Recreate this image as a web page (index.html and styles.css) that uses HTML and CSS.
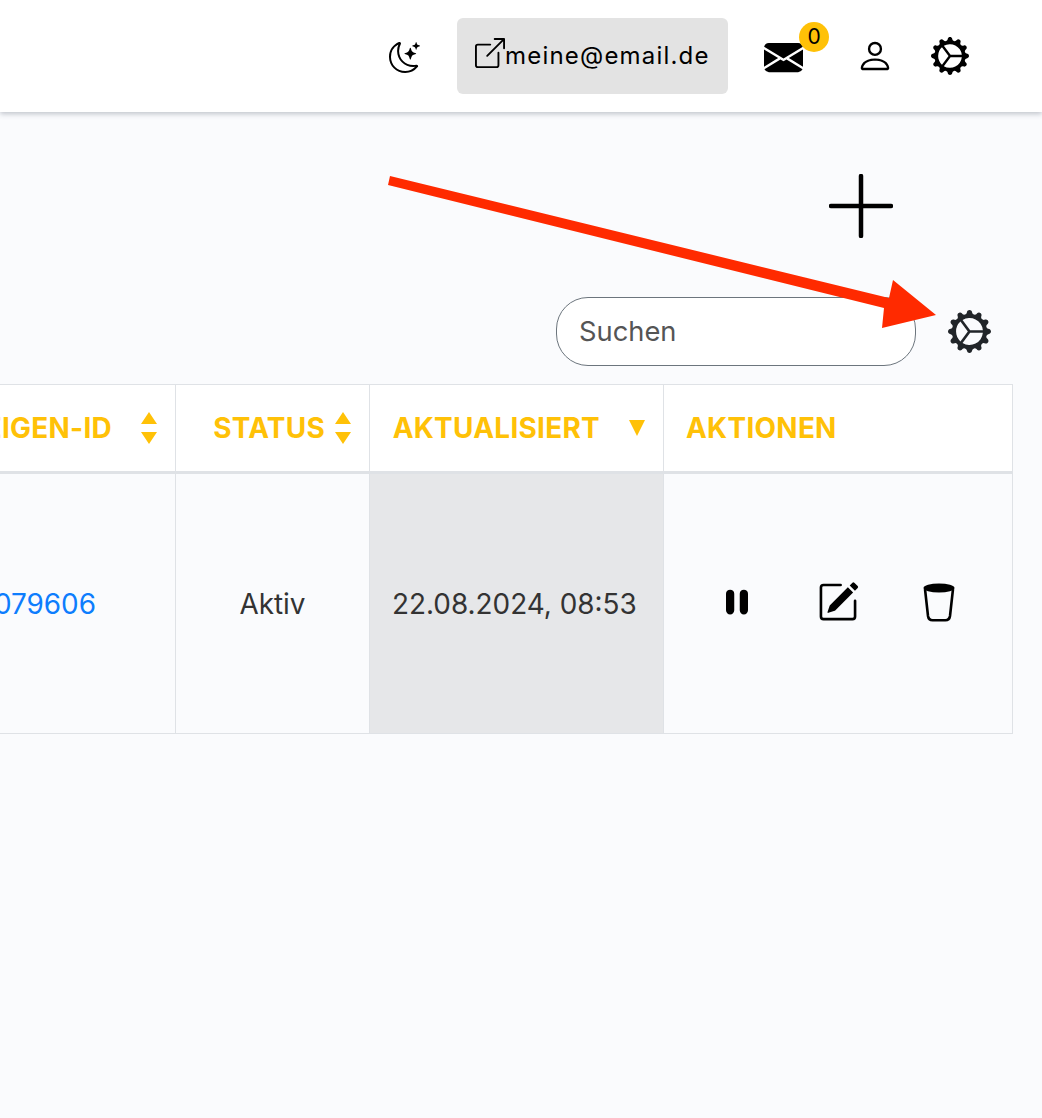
FILE: index.html
```html
<!DOCTYPE html>
<html lang="de">
<head>
<meta charset="utf-8">
<title>Anzeigen</title>
<link rel="stylesheet" href="styles.css">
</head>
<body>
<header class="navbar">
  <svg class="icon moon" viewBox="0 0 16 16"><path d="M6 .278a.77.77 0 0 1 .08.858 7.2 7.2 0 0 0-.878 3.46c0 4.021 3.278 7.277 7.318 7.277q.792-.001 1.533-.16a.79.79 0 0 1 .81.316.73.73 0 0 1-.031.893A8.35 8.35 0 0 1 8.344 16C3.734 16 0 12.286 0 7.71 0 4.266 2.114 1.312 5.124.06A.75.75 0 0 1 6 .278M4.858 1.311A7.27 7.27 0 0 0 1.025 7.71c0 4.02 3.279 7.276 7.319 7.276a7.32 7.32 0 0 0 5.205-2.162q-.506.063-1.029.063c-4.61 0-8.343-3.714-8.343-8.29 0-1.167.242-2.278.681-3.286"/><path d="M10.794 3.148a.217.217 0 0 1 .412 0l.387 1.162c.173.518.579.924 1.097 1.097l1.162.387a.217.217 0 0 1 0 .412l-1.162.387a1.73 1.73 0 0 0-1.097 1.097l-.387 1.162a.217.217 0 0 1-.412 0l-.387-1.162A1.73 1.73 0 0 0 9.31 6.593l-1.162-.387a.217.217 0 0 1 0-.412l1.162-.387a1.73 1.73 0 0 0 1.097-1.097zM13.863.099a.145.145 0 0 1 .274 0l.258.774c.115.346.386.617.732.732l.774.258a.145.145 0 0 1 0 .274l-.774.258a1.16 1.16 0 0 0-.732.732l-.258.774a.145.145 0 0 1-.274 0l-.258-.774a1.16 1.16 0 0 0-.732-.732l-.774-.258a.145.145 0 0 1 0-.274l.774-.258c.346-.115.617-.386.732-.732z"/></svg>
  <div class="account">
    <svg class="icon external" viewBox="0 0 16 16"><path fill-rule="evenodd" d="M8.636 3.5a.5.5 0 0 0-.5-.5H1.5A1.5 1.5 0 0 0 0 4.5v10A1.5 1.5 0 0 0 1.5 16h10a1.5 1.5 0 0 0 1.5-1.5V7.864a.5.5 0 0 0-1 0V14.5a.5.5 0 0 1-.5.5h-10a.5.5 0 0 1-.5-.5v-10a.5.5 0 0 1 .5-.5h6.636a.5.5 0 0 0 .5-.5"/><path fill-rule="evenodd" d="M16 .5a.5.5 0 0 0-.5-.5h-5a.5.5 0 0 0 0 1h3.793L6.146 9.146a.5.5 0 1 0 .708.708L15 1.707V5.5a.5.5 0 0 0 1 0z"/></svg>
    <span class="account-name">meine@email.de</span>
  </div>
  <div class="mail">
    <svg class="icon envelope" viewBox="0 0 16 16"><path d="M.05 3.555A2 2 0 0 1 2 2h12a2 2 0 0 1 1.95 1.555L8 8.414zM0 4.697v7.104l5.803-3.558zM6.761 8.83l-6.57 4.027A2 2 0 0 0 2 14h12a2 2 0 0 0 1.808-1.144l-6.57-4.027L8 9.586zm3.436-.586L16 11.801V4.697z"/></svg>
    <span class="badge">0</span>
  </div>
  <svg class="icon person" viewBox="0 0 16 16"><path d="M8 8a3 3 0 1 0 0-6 3 3 0 0 0 0 6m2-3a2 2 0 1 1-4 0 2 2 0 0 1 4 0m4 8c0 1-1 1-1 1H3s-1 0-1-1 1-4 6-4 6 3 6 4m-1-.004c-.001-.246-.154-.986-.832-1.664C11.516 10.68 10.289 10 8 10s-3.516.68-4.168 1.332c-.678.678-.83 1.418-.832 1.664z"/></svg>
  <svg class="icon gear-nav" viewBox="0 0 16 16"><path d="M7.068.727c.243-.97 1.62-.97 1.864 0l.071.286a.96.96 0 0 0 1.622.434l.205-.211c.695-.719 1.888-.03 1.613.931l-.08.284a.96.96 0 0 0 1.187 1.187l.283-.081c.96-.275 1.65.918.931 1.613l-.211.205a.96.96 0 0 0 .434 1.622l.286.071c.97.243.97 1.62 0 1.864l-.286.071a.96.96 0 0 0-.434 1.622l.211.205c.719.695.03 1.888-.931 1.613l-.284-.08a.96.96 0 0 0-1.187 1.187l.081.283c.275.96-.918 1.65-1.613.931l-.205-.211a.96.96 0 0 0-1.622.434l-.071.286c-.243.97-1.62.97-1.864 0l-.071-.286a.96.96 0 0 0-1.622-.434l-.205.211c-.695.719-1.888.03-1.613-.931l.08-.284a.96.96 0 0 0-1.187-1.187l-.283.081c-.96.275-1.65-.918-.931-1.613l.211-.205a.96.96 0 0 0-.434-1.622l-.286-.071c-.97-.243-.97-1.62 0-1.864l.286-.071a.96.96 0 0 0 .434-1.622l-.211-.205c-.719-.695-.03-1.888.931-1.613l.284.08a.96.96 0 0 0 1.187-1.187l-.081-.283c-.275-.96.918-1.65 1.613-.931l.205.211a.96.96 0 0 0 1.622-.434zM12.973 8.5H8.25l-2.834 3.779A4.998 4.998 0 0 0 12.973 8.5m0-1a4.998 4.998 0 0 0-7.557-3.779l2.834 3.78zM5.048 3.967l-.087.065zm-.431.355A4.98 4.98 0 0 0 3.002 8c0 1.455.622 2.765 1.615 3.678L7.375 8 4.617 4.322zm.344 7.646.087.065z"/></svg>
</header>

<main class="content">
  <div class="add-row">
    <svg class="plus" viewBox="0 0 64 64"><path d="M32 2V62M2 32H62"/></svg>
  </div>
  <div class="toolbar">
    <input class="search" type="text" placeholder="Suchen">
    <svg class="icon gear-table" viewBox="0 0 16 16"><path d="M7.068.727c.243-.97 1.62-.97 1.864 0l.071.286a.96.96 0 0 0 1.622.434l.205-.211c.695-.719 1.888-.03 1.613.931l-.08.284a.96.96 0 0 0 1.187 1.187l.283-.081c.96-.275 1.65.918.931 1.613l-.211.205a.96.96 0 0 0 .434 1.622l.286.071c.97.243.97 1.62 0 1.864l-.286.071a.96.96 0 0 0-.434 1.622l.211.205c.719.695.03 1.888-.931 1.613l-.284-.08a.96.96 0 0 0-1.187 1.187l.081.283c.275.96-.918 1.65-1.613.931l-.205-.211a.96.96 0 0 0-1.622.434l-.071.286c-.243.97-1.62.97-1.864 0l-.071-.286a.96.96 0 0 0-1.622-.434l-.205.211c-.695.719-1.888.03-1.613-.931l.08-.284a.96.96 0 0 0-1.187-1.187l-.283.081c-.96.275-1.65-.918-.931-1.613l.211-.205a.96.96 0 0 0-.434-1.622l-.286-.071c-.97-.243-.97-1.62 0-1.864l.286-.071a.96.96 0 0 0 .434-1.622l-.211-.205c-.719-.695-.03-1.888.931-1.613l.284.08a.96.96 0 0 0 1.187-1.187l-.081-.283c-.275-.96.918-1.65 1.613-.931l.205.211a.96.96 0 0 0 1.622-.434zM12.973 8.5H8.25l-2.834 3.779A4.998 4.998 0 0 0 12.973 8.5m0-1a4.998 4.998 0 0 0-7.557-3.779l2.834 3.78zM5.048 3.967l-.087.065zm-.431.355A4.98 4.98 0 0 0 3.002 8c0 1.455.622 2.765 1.615 3.678L7.375 8 4.617 4.322zm.344 7.646.087.065z"/></svg>
  </div>
  <div class="table-clip">
    <table class="data">
      <colgroup><col class="w-id"><col class="w-status"><col class="w-date"><col class="w-actions"></colgroup>
      <thead>
        <tr>
          <th><div class="th-inner wide">ANZEIGEN-ID<svg class="sort" viewBox="0 0 16 33"><path d="M8 0L16 12H0ZM0 20H16L8 32Z"/></svg></div></th>
          <th><div class="th-inner">STATUS<svg class="sort" viewBox="0 0 16 33"><path d="M8 0L16 12H0ZM0 20H16L8 32Z"/></svg></div></th>
          <th><div class="th-inner wide">AKTUALISIERT<svg class="sort-one" viewBox="0 0 16 16"><path d="M0 0H16L8 16Z"/></svg></div></th>
          <th><div class="th-inner start">AKTIONEN</div></th>
        </tr>
      </thead>
      <tbody>
        <tr>
          <td class="cell-id"><a class="id-link" href="#">1724079606</a></td>
          <td class="cell-status">Aktiv</td>
          <td class="cell-date">22.08.2024, 08:53</td>
          <td>
            <div class="actions">
              <svg class="icon act-pause" viewBox="0 0 16 16"><path d="M5.5 3.5A1.5 1.5 0 0 1 7 5v6a1.5 1.5 0 0 1-3 0V5a1.5 1.5 0 0 1 1.5-1.5m5 0A1.5 1.5 0 0 1 12 5v6a1.5 1.5 0 0 1-3 0V5a1.5 1.5 0 0 1 1.5-1.5"/></svg>
              <svg class="icon act-edit" viewBox="0 0 16 16"><path d="M15.502 1.94a.5.5 0 0 1 0 .706L14.459 3.69l-2-2L13.502.646a.5.5 0 0 1 .707 0l1.293 1.293zm-1.75 2.456-2-2L4.939 9.21a.5.5 0 0 0-.121.196l-.805 2.414a.25.25 0 0 0 .316.316l2.414-.805a.5.5 0 0 0 .196-.12l6.813-6.814z"/><path fill-rule="evenodd" d="M1 13.5A1.5 1.5 0 0 0 2.5 15h11a1.5 1.5 0 0 0 1.5-1.5v-6a.5.5 0 0 0-1 0v6a.5.5 0 0 1-.5.5h-11a.5.5 0 0 1-.5-.5v-11a.5.5 0 0 1 .5-.5H9a.5.5 0 0 0 0-1H2.5A1.5 1.5 0 0 0 1 2.5z"/></svg>
              <svg class="act-cup" viewBox="0 0 32 39"><ellipse cx="16" cy="5" rx="15.5" ry="4.6"/><path d="M2 6L5 33Q5.6 37.2 9.6 37.2H22.4Q26.4 37.2 27 33L30 6"/></svg>
            </div>
          </td>
        </tr>
      </tbody>
    </table>
  </div>
</main>

<svg class="pointer" viewBox="0 0 1042 1118"><polygon points="390,176 889,298 893,280 936,315 882,328 884,308 388,185"/></svg>
</body>
</html>
```

FILE: styles.css
```css
* { box-sizing: border-box; }

html, body {
  margin: 0;
  height: 1118px;
  overflow: hidden;
}

body {
  background: #fafbfd;
  color: #333;
  font-family: Inter, "Liberation Sans", sans-serif;
}

.icon {
  display: block;
  flex: none;
  fill: currentColor;
}

.navbar {
  display: flex;
  align-items: center;
  justify-content: flex-end;
  height: 112px;
  padding-right: 73px;
  background: #fff;
  color: #000;
  box-shadow: 0 2px 5px rgba(60, 70, 90, 0.3);
}

.moon { width: 31px; height: 31px; margin-top: 2px; }

.account {
  display: flex;
  align-items: center;
  width: 271px;
  height: 76px;
  margin-left: 37px;
  padding-left: 18px;
  background: #e3e3e3;
  border-radius: 6px;
  font-size: 24px;
  letter-spacing: 1.2px;
}

.account-name { margin-top: -2px; }

.external { width: 30px; height: 30px; margin-top: -6px; }

.mail {
  position: relative;
  margin-left: 36px;
}

.envelope { width: 39px; height: 39px; margin-top: 2px; }

.badge {
  position: absolute;
  left: 35px;
  top: -14px;
  width: 30px;
  height: 30px;
  border-radius: 50%;
  background: #ffc107;
  font-size: 21px;
  line-height: 30px;
  text-align: center;
}

.person { width: 38px; height: 38px; margin-left: 53px; }

.gear-nav { width: 38px; height: 38px; margin-left: 37px; }

.content {
  display: flex;
  flex-direction: column;
}

.add-row {
  display: flex;
  justify-content: flex-end;
  padding: 62px 149px 0 0;
}

.plus {
  display: block;
  width: 64px;
  height: 64px;
  fill: none;
  stroke: #000;
  stroke-width: 4.5;
  stroke-linecap: round;
}

.toolbar {
  display: flex;
  align-items: center;
  justify-content: flex-end;
  gap: 32px;
  margin-top: 59px;
  padding-right: 51px;
}

.search {
  width: 360px;
  height: 69px;
  padding: 0 22px;
  background: #fff;
  border: 1px solid #6c757d;
  border-radius: 32px;
  font: 27.3px Inter, "Liberation Sans", sans-serif;
  color: #333;
}

.search::placeholder { color: #555; opacity: 1; }

.gear-table { width: 43px; height: 43px; color: #212529; }

.table-clip {
  display: flex;
  justify-content: flex-end;
  width: 1013px;
  margin-top: 18px;
  overflow: hidden;
}

.data {
  flex: none;
  width: 1113px;
  table-layout: fixed;
  border-collapse: collapse;
  font-size: 27.9px;
}

.w-id { width: 276px; }
.w-status { width: 194px; }
.w-date { width: 294px; }
.w-actions { width: 349px; }

.data th, .data td {
  border: 1px solid #dfe2e6;
  padding: 0;
}

.data th {
  height: 88px;
  background: #fff;
  border-bottom-width: 3px;
  color: #ffc107;
  font-weight: 700;
  letter-spacing: 0.3px;
}

.th-inner {
  display: flex;
  align-items: center;
  justify-content: flex-end;
  gap: 10px;
  padding: 0 18px 1px 22px;
  white-space: nowrap;
}

.th-inner.wide { gap: 29px; }
.th-inner.start { justify-content: flex-start; }

.sort {
  flex: none;
  width: 16px;
  height: 33px;
  margin-top: 1px;
  fill: #ffc107;
}

.sort-one {
  flex: none;
  width: 16px;
  height: 16px;
  margin-top: 1px;
  fill: #ffc107;
}

.data td {
  height: 261px;
  color: #333;
  font-weight: 400;
}

.cell-id { padding-right: 79px !important; text-align: right; white-space: nowrap; }
.cell-status { text-align: center; }
.cell-date { padding-left: 22px !important; background: #e6e7e9; white-space: nowrap; }

.id-link {
  color: #0d7dfd;
  text-decoration: none;
}

.actions {
  display: flex;
  align-items: center;
  padding: 0 0 3px 51px;
  color: #000;
}

.act-pause { width: 44px; height: 44px; }
.act-edit { width: 42px; height: 42px; margin-left: 58px; }

.act-cup {
  display: block;
  flex: none;
  width: 32px;
  height: 39px;
  margin-left: 64px;
}

.act-cup ellipse { fill: #000; }
.act-cup path { fill: none; stroke: #000; stroke-width: 2.6; stroke-linejoin: round; }

.pointer {
  position: absolute;
  left: 0;
  top: 0;
  width: 1042px;
  height: 1118px;
  fill: #ff2a00;
  pointer-events: none;
}
```
